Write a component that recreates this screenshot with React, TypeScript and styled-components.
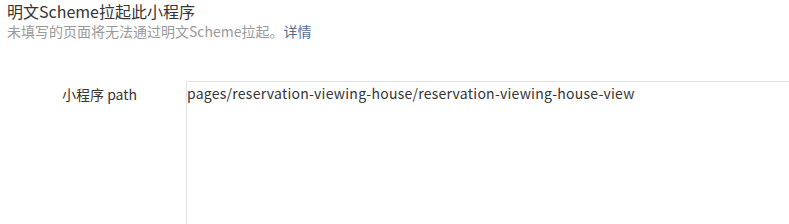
import React from "react";
import styled, { createGlobalStyle } from "styled-components";

const Global = createGlobalStyle`
  html, body { margin: 0; padding: 0; background: #fff; }
  body { font-family: "Noto Sans CJK SC", "Noto Sans", sans-serif; color: #353535; }
`;

const Page = styled.div`
  padding: 0 0 0 7px;
  width: 789px;
  height: 224px;
  box-sizing: border-box;
  overflow: hidden;
`;

const Header = styled.div`
  display: flex;
  flex-direction: column;
  padding-top: 1px;
`;

const Title = styled.div`
  font-size: 16px;
  line-height: 20px;
  color: #353535;
`;

const Desc = styled.div`
  font-size: 14px;
  line-height: 20px;
  color: #9a9a9a;
`;

const Link = styled.a`
  color: #576b95;
  text-decoration: none;
`;

const Row = styled.div`
  display: flex;
  margin-top: 40px;
`;

const Label = styled.label`
  flex: 0 0 179px;
  padding-left: 55px;
  box-sizing: border-box;
  font-size: 14px;
  line-height: 24px;
  padding-top: 1px;
  color: #353535;
`;

const Area = styled.textarea`
  flex: 0 0 620px;
  height: 160px;
  border: 1px solid #e2e2e2;
  border-radius: 2px;
  padding: 0;
  margin: 0;
  font-family: "Noto Sans CJK SC", "Noto Sans", sans-serif;
  font-size: 14px;
  letter-spacing: 0.25px;
  line-height: 22px;
  color: #353535;
  resize: none;
  outline: none;
`;

export default function App() {
  return (
    <>
      <Global />
      <Page>
        <Header>
          <Title>明文Scheme拉起此小程序</Title>
          <Desc>
            未填写的页面将无法通过明文Scheme拉起。<Link href="#">详情</Link>
          </Desc>
        </Header>
        <Row>
          <Label>小程序 path</Label>
          <Area defaultValue="pages/reservation-viewing-house/reservation-viewing-house-view" />
        </Row>
      </Page>
    </>
  );
}
